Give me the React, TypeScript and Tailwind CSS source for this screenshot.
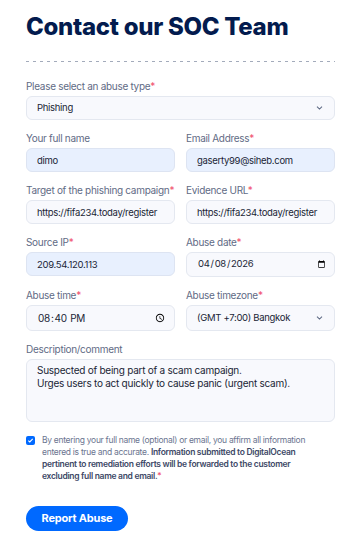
import React from "react";

const Label = ({ text, required }: { text: string; required?: boolean }) => (
  <label className="block text-[10px] leading-[14px] tracking-[-0.3px] text-[#5f6b85] mb-[3px]">
    {text}
    {required && <span className="text-[#f0506e]">*</span>}
  </label>
);

const inputCls =
  "block w-full h-[24px] rounded-[6px] border border-[#e4e8f0] bg-[#f8f9fd] pl-[10px] pr-[6px] text-[9.5px] tracking-[-0.3px] text-[#1a1f36] outline-none";
const filledCls =
  "block w-full h-[24px] rounded-[6px] border border-[#dde4f2] bg-[#e8f0fe] pl-[10px] pr-[6px] text-[9.5px] tracking-[-0.3px] text-[#1a1f36] outline-none";

const Chevron = () => (
  <svg
    className="absolute right-[12px] top-1/2 -translate-y-1/2 pointer-events-none"
    width="7"
    height="5"
    viewBox="0 0 7 5"
    fill="none"
  >
    <path d="M1 1.2L3.5 3.6L6 1.2" stroke="#5f6b85" strokeWidth="1.1" />
  </svg>
);

export default function App() {
  return (
    <div className="min-h-screen bg-white px-[26px] pt-[11px] pb-[12px] font-['Inter',sans-serif]">
      <h1 className="text-[24px] leading-[32px] font-extrabold tracking-[-0.3px] text-[#031b4e]">
        Contact our SOC Team
      </h1>
      <div className="mt-[18px] h-px w-full bg-[linear-gradient(to_right,#a3abbb_3px,transparent_3px)] bg-[length:7px_1px]" />

      <form className="mt-[17px] flex flex-col gap-[11px]" onSubmit={(e) => e.preventDefault()}>
        <div>
          <Label text="Please select an abuse type" required />
          <div className="relative">
            <select className={inputCls + " appearance-none"} defaultValue="phishing">
              <option value="phishing">Phishing</option>
              <option value="spam">Spam</option>
              <option value="malware">Malware</option>
            </select>
            <Chevron />
          </div>
        </div>

        <div className="grid grid-cols-2 gap-x-[11px]">
          <div>
            <Label text="Your full name" />
            <input className={filledCls} defaultValue="dimo" />
          </div>
          <div>
            <Label text="Email Address" required />
            <input className={filledCls} defaultValue="gaserty99@siheb.com" />
          </div>
        </div>

        <div className="grid grid-cols-2 gap-x-[11px]">
          <div>
            <Label text="Target of the phishing campaign" required />
            <input className={inputCls} defaultValue="https://fifa234.today/register" />
          </div>
          <div>
            <Label text="Evidence URL" required />
            <input className={inputCls} defaultValue="https://fifa234.today/register" />
          </div>
        </div>

        <div className="grid grid-cols-2 gap-x-[11px]">
          <div>
            <Label text="Source IP" required />
            <input className={filledCls} defaultValue="209.54.120.113" />
          </div>
          <div>
            <Label text="Abuse date" required />
            <input type="date" className={inputCls + " h-[25px]"} defaultValue="2026-04-08" />
          </div>
        </div>

        <div className="grid grid-cols-2 gap-x-[11px]">
          <div>
            <Label text="Abuse time" required />
            <input type="time" className={inputCls + " h-[26px] text-[10px]"} defaultValue="20:40" />
          </div>
          <div>
            <Label text="Abuse timezone" required />
            <div className="relative">
              <select className={inputCls + " h-[26px] appearance-none"} defaultValue="bkk">
                <option value="bkk">(GMT +7:00) Bangkok</option>
                <option value="utc">(GMT +0:00) UTC</option>
              </select>
              <Chevron />
            </div>
          </div>
        </div>

        <div>
          <Label text="Description/comment" />
          <textarea
            className="block w-full h-[63px] resize-none rounded-[6px] border border-[#e4e8f0] bg-[#f8f9fd] px-[10px] py-[4px] text-[10px] leading-[13.3px] tracking-[-0.25px] text-[#1a1f36] outline-none"
            defaultValue={
              "Suspected of being part of a scam campaign.\nUrges users to act quickly to cause panic (urgent scam)."
            }
          />
        </div>

        <div className="mt-[1px] flex items-start gap-[7px]">
          <span className="mt-[2px] flex h-[9px] w-[9px] shrink-0 items-center justify-center rounded-[2px] bg-[#0069ff]">
            <svg width="7" height="7" viewBox="0 0 7 7" fill="none">
              <path d="M1.3 3.6L2.8 5L5.7 1.9" stroke="white" strokeWidth="1.1" />
            </svg>
          </span>
          <p className="pr-[16px] text-[8.5px] leading-[12px] tracking-[-0.3px] text-[#6b7590]">
            By entering your full name (optional) or email, you affirm all information entered is true and accurate.{" "}
            <span className="font-semibold text-[#3d4866]">
              Information submitted to DigitalOcean pertinent to remediation efforts will be forwarded to the customer
              excluding full name and email.
            </span>
            <span className="text-[#f0506e]">*</span>
          </p>
        </div>

        <div className="mt-[11px]">
          <button
            type="submit"
            className="h-[25px] w-[102px] rounded-full bg-[#0069ff] text-[11px] font-bold tracking-[-0.2px] text-white"
          >
            Report Abuse
          </button>
        </div>
      </form>
    </div>
  );
}
